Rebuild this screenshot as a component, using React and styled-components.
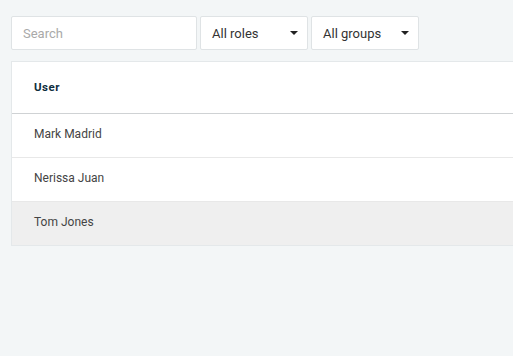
import React from 'react';
import styled, { createGlobalStyle } from 'styled-components';

const users = ['Mark Madrid', 'Nerissa Juan', 'Tom Jones'];

export default function App() {
  return (
    <>
      <GlobalStyle />
      <Page>
        <Toolbar>
          <SearchInput placeholder='Search' />
          <Select label='All roles' />
          <Select label='All groups' />
        </Toolbar>
        <Table>
          <HeadRow>
            <HeadCell>User</HeadCell>
          </HeadRow>
          {users.map((name, id) => (
            <Row key={id} $active={id === 2}>{name}</Row>
          ))}
        </Table>
      </Page>
    </>
  );
}

function Select({ label }) {
  return (
    <SelectBox>
      <span>{label}</span>
      <Caret />
    </SelectBox>
  );
}

const GlobalStyle = createGlobalStyle`
  html, body {
    margin: 0;
    background: #f3f6f7;
    font-family: Roboto, "Liberation Sans", sans-serif;
    overflow: hidden;
  }
`;

const Page = styled.div`
  padding: 16px 0 0 11px;
  width: 560px;
`;

const Toolbar = styled.div`
  display: flex;
  gap: 3px;
  margin-bottom: 11px;
`;

const SearchInput = styled.input`
  box-sizing: border-box;
  width: 186px;
  height: 34px;
  padding: 0 11px;
  border: 1px solid #dfe3e5;
  border-radius: 2px;
  background: #fff;
  font-family: inherit;
  font-size: 13px;
  color: #333;
  outline: none;

  &::placeholder {
    color: #a9a9a9;
  }
`;

const SelectBox = styled.div`
  box-sizing: border-box;
  width: 108px;
  height: 34px;
  padding: 0 9px 0 11px;
  display: flex;
  align-items: center;
  justify-content: space-between;
  border: 1px solid #dfe3e5;
  border-radius: 2px;
  background: #fff;
  font-size: 13px;
  color: #333;
`;

const Caret = styled.span`
  width: 0;
  height: 0;
  border-left: 4px solid transparent;
  border-right: 4px solid transparent;
  border-top: 4px solid #222;
`;

const Table = styled.div`
  border: 1px solid #e4e8ea;
  border-right: none;
  background: #fff;
`;

const HeadRow = styled.div`
  box-sizing: border-box;
  height: 52px;
  display: flex;
  align-items: center;
  padding: 0 0 2px 22px;
  border-bottom: 1px solid #cfd2d4;
`;

const HeadCell = styled.div`
  font-size: 11.5px;
  font-weight: 700;
  letter-spacing: 0.5px;
  color: #0f2e3d;
`;

const Row = styled.div`
  box-sizing: border-box;
  height: 43px;
  display: flex;
  align-items: center;
  padding: 0 0 3px 22px;
  font-size: 12px;
  color: #444;
  background: ${p => (p.$active ? '#efefef' : '#fff')};

  & + & {
    height: 44px;
    border-top: 1px solid #e8e8e8;
  }
`;
